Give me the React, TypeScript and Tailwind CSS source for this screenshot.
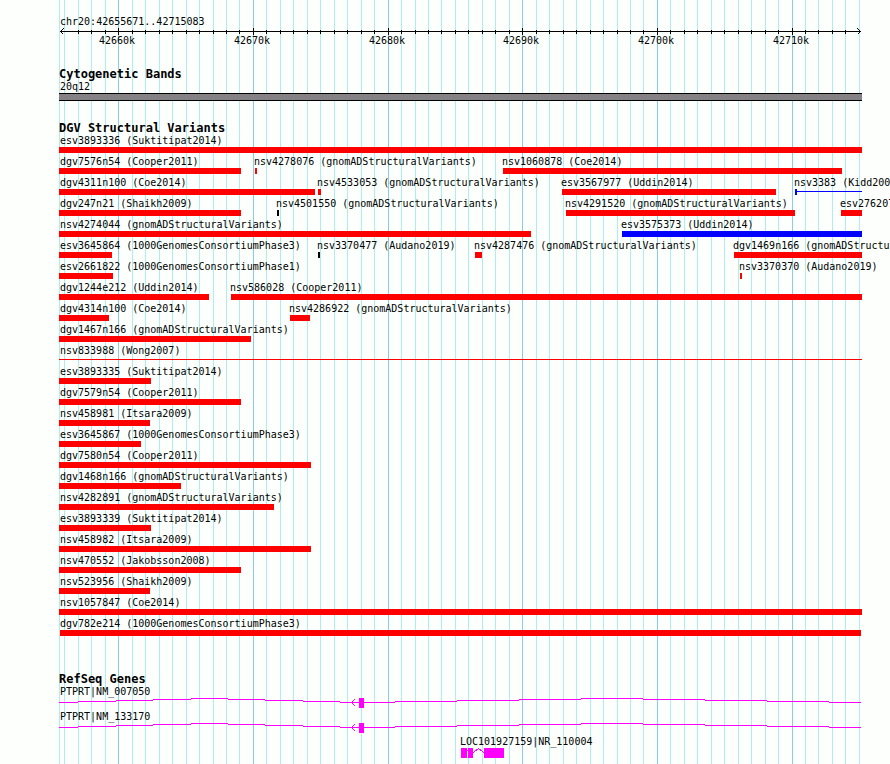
type Kind = "gain" | "loss" | "other" | "gainSpan" | "lossSpan";

type Feature = {
  name: string;
  start: number;
  end: number;
  kind?: Kind;
};

type Gene = {
  name: string;
  labelAt: number;
  exons: [number, number][];
  // horizontal intron runs: [from, to, y]
  introns: [number, number, number][];
  strokes: string[];
};

// Width of the track in drawing units
const SPAN = 803;

const REGION = { chrom: "chr20", start: 42655671, end: 42715083 };

const pct = (n: number) => `${(n / SPAN) * 100}%`;

const toUnit = (bp: number) =>
  Math.round(((bp - REGION.start) / (REGION.end - REGION.start)) * 800 + 1);

const ticks: { bp: number; at: number; major: boolean }[] = [];
for (let bp = 42656000; bp <= REGION.end; bp += 1000) {
  ticks.push({ bp, at: toUnit(bp), major: bp % 10000 === 0 });
}
const majorTicks = ticks.filter((t) => t.major);

const lanes: Feature[][] = [
  [{ name: "esv3893336 (Suktitipat2014)", start: 0, end: 803 }],
  [
    { name: "dgv7576n54 (Cooper2011)", start: 0, end: 182 },
    { name: "nsv4278076 (gnomADStructuralVariants)", start: 196, end: 198 },
    { name: "nsv1060878 (Coe2014)", start: 444, end: 783 },
  ],
  [
    { name: "dgv4311n100 (Coe2014)", start: 0, end: 256 },
    { name: "nsv4533053 (gnomADStructuralVariants)", start: 259, end: 262 },
    { name: "esv3567977 (Uddin2014)", start: 503, end: 717 },
    { name: "nsv3383 (Kidd2008)", start: 736, end: 803, kind: "gainSpan" },
  ],
  [
    { name: "dgv247n21 (Shaikh2009)", start: 0, end: 182 },
    { name: "nsv4501550 (gnomADStructuralVariants)", start: 218, end: 220, kind: "other" },
    { name: "nsv4291520 (gnomADStructuralVariants)", start: 507, end: 736 },
    { name: "esv276207", start: 782, end: 803 },
  ],
  [
    { name: "nsv4274044 (gnomADStructuralVariants)", start: 0, end: 472 },
    { name: "esv3575373 (Uddin2014)", start: 563, end: 803, kind: "gain" },
  ],
  [
    { name: "esv3645864 (1000GenomesConsortiumPhase3)", start: 0, end: 53 },
    { name: "nsv3370477 (Audano2019)", start: 259, end: 261, kind: "other" },
    { name: "nsv4287476 (gnomADStructuralVariants)", start: 416, end: 423 },
    { name: "dgv1469n166 (gnomADStructuralVariants)", start: 675, end: 803 },
  ],
  [
    { name: "esv2661822 (1000GenomesConsortiumPhase1)", start: 0, end: 54 },
    { name: "nsv3370370 (Audano2019)", start: 681, end: 683 },
  ],
  [
    { name: "dgv1244e212 (Uddin2014)", start: 0, end: 150 },
    { name: "nsv586028 (Cooper2011)", start: 172, end: 803 },
  ],
  [
    { name: "dgv4314n100 (Coe2014)", start: 0, end: 50 },
    { name: "nsv4286922 (gnomADStructuralVariants)", start: 231, end: 251 },
  ],
  [{ name: "dgv1467n166 (gnomADStructuralVariants)", start: 0, end: 192 }],
  [{ name: "nsv833988 (Wong2007)", start: 0, end: 803, kind: "lossSpan" }],
  [{ name: "esv3893335 (Suktitipat2014)", start: 0, end: 92 }],
  [{ name: "dgv7579n54 (Cooper2011)", start: 0, end: 182 }],
  [{ name: "nsv458981 (Itsara2009)", start: 0, end: 91 }],
  [{ name: "esv3645867 (1000GenomesConsortiumPhase3)", start: 0, end: 82 }],
  [{ name: "dgv7580n54 (Cooper2011)", start: 0, end: 252 }],
  [{ name: "dgv1468n166 (gnomADStructuralVariants)", start: 0, end: 122 }],
  [{ name: "nsv4282891 (gnomADStructuralVariants)", start: 0, end: 215 }],
  [{ name: "esv3893339 (Suktitipat2014)", start: 0, end: 92 }],
  [{ name: "nsv458982 (Itsara2009)", start: 0, end: 252 }],
  [{ name: "nsv470552 (Jakobsson2008)", start: 0, end: 182 }],
  [{ name: "nsv523956 (Shaikh2009)", start: 0, end: 91 }],
  [{ name: "nsv1057847 (Coe2014)", start: 0, end: 803 }],
  [{ name: "dgv782e214 (1000GenomesConsortiumPhase3)", start: 1, end: 802 }],
];

const ptprtIntrons: [number, number, number][] = [
  [0, 19, 4],
  [19, 57, 3],
  [57, 94, 2],
  [94, 132, 1],
  [132, 169, 0],
  [169, 206, 1],
  [206, 244, 2],
  [244, 281, 3],
  [281, 336, 4],
  [336, 398, 3],
  [398, 460, 2],
  [460, 522, 1],
  [522, 584, 0],
  [584, 646, 1],
  [646, 708, 2],
  [708, 770, 3],
  [770, 802, 4],
];

const ptprt = {
  labelAt: 1,
  exons: [[300, 305]] as [number, number][],
  introns: ptprtIntrons,
  strokes: ["M296 1 L292.5 4.5 L296 8"],
};

const genes: Gene[] = [
  { name: "PTPRT|NM_007050", ...ptprt },
  { name: "PTPRT|NM_133170", ...ptprt },
  {
    name: "LOC101927159|NR_110004",
    labelAt: 401,
    exons: [
      [402, 408],
      [409, 414],
      [425, 445],
    ],
    introns: [[408, 409, 2]],
    strokes: ["M414 4.5 L419.5 0.5 L425 4.5"],
  },
];

const GridLines = () => (
  <svg className="absolute inset-0 h-full w-full" shapeRendering="crispEdges" aria-hidden="true">
    <rect x="0" y="0" width="1" height="100%" className="fill-[#afeeee]" />
    {ticks.map((t) => (
      <rect
        key={t.bp}
        x={pct(t.at)}
        y="0"
        width="1"
        height="100%"
        className={t.major ? "fill-[#87ceeb]" : "fill-[#afeeee]"}
      />
    ))}
  </svg>
);

const Ruler = () => (
  <header>
    <p className="pl-px">
      {REGION.chrom}:{REGION.start}..{REGION.end}
    </p>
    <svg
      className="block h-[7px] w-full"
      viewBox="0 0 803 7"
      preserveAspectRatio="none"
      shapeRendering="crispEdges"
      aria-hidden="true"
    >
      <rect x="1" y="3" width="801" height="1" />
      {ticks.slice(1, -1).map((t) => (
        <rect
          key={t.bp}
          x={t.at}
          y={t.major ? 0 : 2}
          width="1"
          height={t.major ? 7 : 4}
        />
      ))}
      <path d="M4.5 0.5 L1.5 3.5 L4.5 6.5 M798.5 0.5 L801.5 3.5 L798.5 6.5" fill="none" stroke="black" />
    </svg>
    <div className="flex leading-3">
      {majorTicks.map((t, i) => (
        <span
          key={t.bp}
          className="flex w-0 shrink-0 justify-center"
          style={{ marginLeft: pct(t.at - (i ? majorTicks[i - 1].at : 1)) }}
        >
          {t.bp / 1000}k
        </span>
      ))}
    </div>
  </header>
);

const Glyph = ({ kind = "loss" }: { kind?: Kind }) => {
  if (kind === "gainSpan") {
    return (
      <div className="flex h-[6px] border-l-2 border-[#0000ff] pt-[2px]">
        <div className="h-px w-full bg-[#0000ff]" />
      </div>
    );
  }
  if (kind === "lossSpan") {
    return (
      <div className="h-[6px] pt-[2px]">
        <div className="h-px bg-[#ff0000]" />
      </div>
    );
  }
  if (kind === "gain") return <div className="h-[6px] bg-[#0000ff]" />;
  if (kind === "other") return <div className="h-[6px] bg-black" />;
  return <div className="h-[6px] bg-[#ff0000]" />;
};

const labelInset = (start: number) => {
  if (start === 0) return "pl-px";
  return start > 1 ? "-ml-px" : "";
};

const Lane = ({ features }: { features: Feature[] }) => (
  <li className="flex pb-[2px]">
    {features.map((f, i) => (
      <div
        key={f.name}
        className="min-w-0 shrink-0"
        style={{
          marginLeft: pct(f.start - (i ? features[i - 1].end : 0)),
          width: pct(f.end - f.start),
        }}
      >
        <p className={labelInset(f.start)}>{f.name}</p>
        <Glyph kind={f.kind} />
      </div>
    ))}
  </li>
);

const GeneRow = ({ gene }: { gene: Gene }) => (
  <li className="pb-[2px]">
    <p style={{ marginLeft: pct(gene.labelAt) }}>{gene.name}</p>
    <svg
      className="block h-[10px] w-full fill-[#ff00ff]"
      viewBox="0 0 803 10"
      preserveAspectRatio="none"
      shapeRendering="crispEdges"
      aria-hidden="true"
    >
      {gene.introns.map(([from, to, y]) => (
        <rect key={from} x={from} y={y} width={to - from} height="1" />
      ))}
      {gene.exons.map(([from, to]) => (
        <rect key={from} x={from} y="0" width={to - from} height="10" />
      ))}
      {gene.strokes.map((d) => (
        <path key={d} d={d} fill="none" stroke="#ff00ff" />
      ))}
    </svg>
  </li>
);

const TrackTitle = ({ children }: { children: string }) => (
  <h2 className="pt-[2px] text-[12px] leading-3 font-bold">{children}</h2>
);

export default function App() {
  return (
    <main className="min-h-screen overflow-hidden bg-[#fdfffc] pr-7 pl-[59px] font-['DejaVu_Sans_Mono','Liberation_Mono',monospace] text-[10px] leading-[13px] whitespace-nowrap text-black">
      <div className="relative min-h-screen">
        <GridLines />
        <div className="relative flex flex-col gap-[19px] pt-[15px] pb-1">
          <Ruler />

          <section>
            <TrackTitle>Cytogenetic Bands</TrackTitle>
            <p className="pl-px">20q12</p>
            <div className="h-2 border-y border-black bg-[#848284]" />
          </section>

          <section className="pb-[14px]">
            <TrackTitle>DGV Structural Variants</TrackTitle>
            <ul>
              {lanes.map((features) => (
                <Lane key={features[0].name} features={features} />
              ))}
            </ul>
          </section>

          <section>
            <TrackTitle>RefSeq Genes</TrackTitle>
            <ul>
              {genes.map((gene) => (
                <GeneRow key={gene.name} gene={gene} />
              ))}
            </ul>
          </section>
        </div>
      </div>
    </main>
  );
}
